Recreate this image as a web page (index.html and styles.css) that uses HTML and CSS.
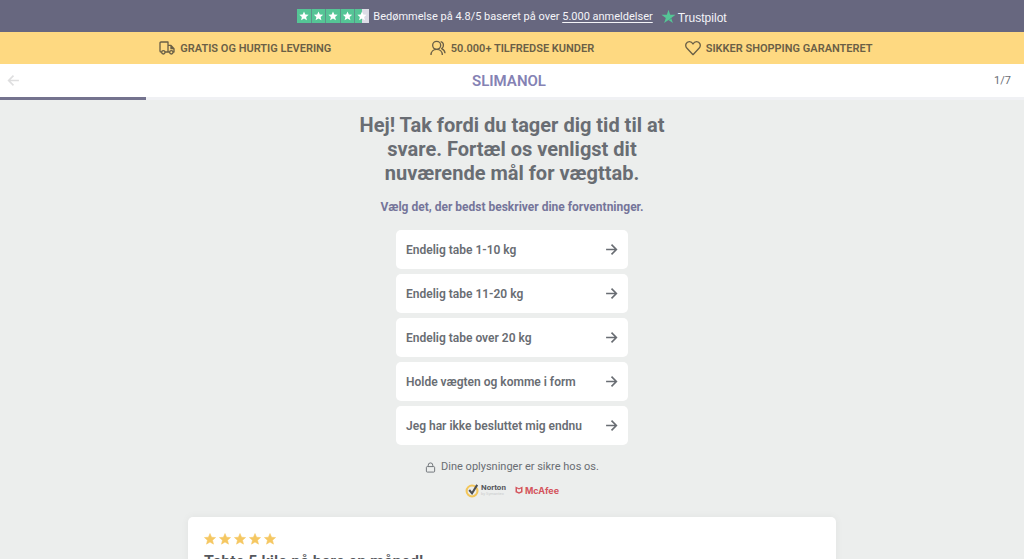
FILE: index.html
```html
<!DOCTYPE html>
<html lang="da">
<head>
    <meta charset="UTF-8">
    <meta name="viewport" content="width=device-width, initial-scale=1.0">
    <title>Slimanol</title>
    <link rel="stylesheet" href="styles.css">
</head>
<body>
    <svg class="sprite" aria-hidden="true">
        <symbol id="star" viewBox="0 0 24 24">
            <path d="M12 1l3.200 7.400 8 .7-6.100 5.300 1.900 7.900L12 18.100l-7 4.200 1.900-7.900L.8 9.100l8-.7z"/>
        </symbol>
        <symbol id="arrow" viewBox="0 0 24 24">
            <path d="M2 12h19M12 3l9 9-9 9"/>
        </symbol>
    </svg>

    <div class="rating-bar">
        <svg class="rating-stars" viewBox="0 0 72 14" role="img" aria-label="4.8 ud af 5 stjerner">
            <path fill="#55c596" d="M0 0h14v14H0zM14.500 0h14v14h-14zM29 0h14v14H29zM43.500 0h14v14h-14zM58 0h7v14h-7z"/>
            <path fill="#dcdce6" d="M65 0h7v14h-7z"/>
            <g fill="#fff">
                <use href="#star" x="2" y="2" width="10" height="10"/>
                <use href="#star" x="16.500" y="2" width="10" height="10"/>
                <use href="#star" x="31" y="2" width="10" height="10"/>
                <use href="#star" x="45.500" y="2" width="10" height="10"/>
                <use href="#star" x="60" y="2" width="10" height="10"/>
            </g>
        </svg>
        <span class="rating-text">Bedømmelse på 4.8/5 baseret på over <a href="#reviews">5.000 anmeldelser</a></span>
        <span class="trustpilot">
            <svg viewBox="0 0 24 24" aria-hidden="true">
                <path fill="#55c596" d="M12 1l2.700 8.200h8.600l-7 5.100 2.700 8.200-7-5.100-7 5.100 2.700-8.200-7-5.100h8.600z"/>
                <path fill="#3f9a7c" d="M16.900 16.100l-.600-1.800L12 17.400z"/>
            </svg>
            <span>Trustpilot</span>
        </span>
    </div>

    <div class="usp-bar">
        <ul class="usp-list">
            <li>
                <svg class="icon" viewBox="0 0 24 24" aria-hidden="true">
                    <path d="M4 18H3a1.500 1.500 0 0 1-1.500-1.500v-12A1.500 1.500 0 0 1 3 3h10.500v15H9M13.500 8H18l4.500 5v5H21M16 18h-2.500M18 8v5h4.500"/>
                    <circle cx="6.500" cy="18.500" r="2.500"/>
                    <circle cx="18.500" cy="18.500" r="2.500"/>
                </svg>
                GRATIS OG HURTIG LEVERING
            </li>
            <li>
                <svg class="icon" viewBox="0 0 24 24" aria-hidden="true">
                    <circle cx="10" cy="8" r="6"/>
                    <path d="M1.500 22.500c0-5 3.500-8.500 8.500-8.500s8.500 3.500 8.500 8.500M16 2.500c5 1 5.500 8 1.500 10.500 3 1.500 5 4 5 7"/>
                </svg>
                50.000+ TILFREDSE KUNDER
            </li>
            <li>
                <svg class="icon" viewBox="0 0 24 24" aria-hidden="true">
                    <path d="M12 22L3 12.500C-1 8 2 2.500 6.500 2.500c2.500 0 4.500 1.500 5.500 3.500 1-2 3-3.500 5.500-3.500C22 2.500 25 8 21 12.500z"/>
                </svg>
                SIKKER SHOPPING GARANTERET
            </li>
        </ul>
    </div>

    <header class="quiz-header">
        <button class="back" type="button" aria-label="Tilbage">
            <svg viewBox="0 0 24 24" aria-hidden="true"><path d="M22 12H3M12 3l-9 9 9 9"/></svg>
        </button>
        <a class="logo" href="#">SLIMANOL</a>
        <span class="step">1/7</span>
    </header>
    <div class="progress"><div class="progress-fill" style="width: 14.29%"></div></div>

    <main class="quiz">
        <h1>Hej! Tak fordi du tager dig tid til at svare. Fortæl os venligst dit nuværende mål for vægttab.</h1>
        <p class="hint">Vælg det, der bedst beskriver dine forventninger.</p>

        <div class="options">
            <button class="option" type="button">Endelig tabe 1-10 kg <svg aria-hidden="true"><use href="#arrow"/></svg></button>
            <button class="option" type="button">Endelig tabe 11-20 kg <svg aria-hidden="true"><use href="#arrow"/></svg></button>
            <button class="option" type="button">Endelig tabe over 20 kg <svg aria-hidden="true"><use href="#arrow"/></svg></button>
            <button class="option" type="button">Holde vægten og komme i form <svg aria-hidden="true"><use href="#arrow"/></svg></button>
            <button class="option" type="button">Jeg har ikke besluttet mig endnu <svg aria-hidden="true"><use href="#arrow"/></svg></button>
        </div>

        <p class="secure">
            <svg viewBox="0 0 24 24" aria-hidden="true">
                <rect x="3" y="10" width="18" height="12" rx="2"/>
                <path d="M7 10V7a5 5 0 0 1 10 0v3"/>
            </svg>
            Dine oplysninger er sikre hos os.
        </p>

        <div class="badges">
            <span class="norton">
                <svg viewBox="0 0 16 16" aria-hidden="true">
                    <circle cx="7.500" cy="8.500" r="5.800" fill="none" stroke="#f3c65a" stroke-width="2.200"/>
                    <path d="M4.500 7.500l3 3.500L13 2" fill="none" stroke="#4d4f52" stroke-width="2.200"/>
                </svg>
                <span class="norton-name">Norton<small>by Symantec</small></span>
            </span>
            <span class="mcafee">
                <svg viewBox="0 0 16 16" aria-hidden="true">
                    <path d="M1 1l7 3.500L15 1v11.500L8 15.500l-7-3V1zM4 5v5.500l4 2 4-2V5L8 7z" fill="#d4545c" fill-rule="evenodd"/>
                </svg>
                McAfee
            </span>
        </div>

        <article class="review" id="reviews">
            <div class="review-stars" role="img" aria-label="5 ud af 5 stjerner">
                <svg><use href="#star"/></svg>
                <svg><use href="#star"/></svg>
                <svg><use href="#star"/></svg>
                <svg><use href="#star"/></svg>
                <svg><use href="#star"/></svg>
            </div>
            <h2>Tabte 5 kilo på bare en måned!</h2>
        </article>
    </main>
</body>
</html>
```

FILE: styles.css
```css
* {
    margin: 0;
    padding: 0;
    box-sizing: border-box;
}

body {
    font-family: Roboto, "Liberation Sans", sans-serif;
    background: #eceeed;
    color: #696d73;
    height: 100vh;
    overflow: hidden;
}

button {
    font: inherit;
    color: inherit;
    background: none;
    border: 0;
    cursor: pointer;
}

svg {
    flex: none;
}

.sprite {
    position: absolute;
    width: 0;
    height: 0;
}

/* Top bars */
.rating-bar {
    display: flex;
    align-items: center;
    justify-content: center;
    height: 32px;
    background: #67677f;
    color: #f4f4f8;
    font-size: 11px;
}

.rating-stars {
    width: 72px;
    height: 14px;
    margin-right: 4px;
}

.rating-text a {
    color: inherit;
    text-underline-offset: 2px;
}

.trustpilot {
    display: flex;
    align-items: center;
    gap: 2px;
    margin-left: 8px;
    font-family: "Liberation Sans", Arial, sans-serif;
    font-size: 12px;
}

.trustpilot svg {
    width: 15px;
    height: 15px;
}

.trustpilot span {
    padding-top: 3px;
}

.usp-bar {
    background: #fed981;
}

.usp-list {
    display: grid;
    grid-template-columns: repeat(3, 1fr);
    max-width: 800px;
    height: 32px;
    margin: 0 auto;
    list-style: none;
    color: #6a5f46;
    font-size: 11px;
    font-weight: 600;
}

.usp-list li {
    display: flex;
    align-items: center;
    justify-content: center;
    gap: 5px;
}

.icon {
    width: 16px;
    height: 16px;
    fill: none;
    stroke: currentColor;
    stroke-width: 2;
    stroke-linejoin: round;
}

/* Quiz header */
.quiz-header {
    display: grid;
    grid-template-columns: 1fr auto 1fr;
    align-items: center;
    height: 33px;
    padding: 0 13px 0 7px;
    background: #fff;
}

.back {
    justify-self: start;
    display: flex;
}

.back svg {
    width: 13px;
    height: 13px;
    fill: none;
    stroke: #dededf;
    stroke-width: 3;
}

.logo {
    color: #8582b4;
    font-size: 15px;
    font-weight: 600;
    text-decoration: none;
}

.step {
    justify-self: end;
    font-size: 11px;
}

.progress {
    height: 3px;
    background: #f0f1f4;
}

.progress-fill {
    height: 100%;
    background: #74738e;
}

/* Question */
.quiz {
    display: flex;
    flex-direction: column;
    align-items: center;
    padding: 13px 16px 0;
}

h1 {
    max-width: 324px;
    font-size: 20px;
    line-height: 24px;
    font-weight: 700;
    text-align: center;
}

.hint {
    margin: 14px 0 15px;
    color: #75759a;
    font-size: 12px;
    line-height: 16px;
    font-weight: 700;
}

.options {
    display: flex;
    flex-direction: column;
    gap: 5px;
    width: 100%;
    max-width: 232px;
}

.option {
    display: flex;
    align-items: center;
    justify-content: space-between;
    height: 39px;
    padding: 0 10px;
    border-radius: 5px;
    background: #fff;
    font-size: 12px;
    font-weight: 600;
}

.option svg {
    width: 13px;
    height: 13px;
    fill: none;
    stroke: currentColor;
    stroke-width: 3;
}

.secure {
    display: flex;
    align-items: center;
    gap: 5px;
    margin-top: 14px;
    font-size: 11px;
    line-height: 16px;
}

.secure svg {
    width: 11px;
    height: 11px;
    fill: none;
    stroke: currentColor;
    stroke-width: 2;
}

.badges {
    display: flex;
    align-items: center;
    gap: 9px;
    height: 16px;
    margin-top: 7px;
    font-weight: 700;
}

.norton,
.mcafee {
    display: flex;
    align-items: center;
    gap: 1px;
}

.norton svg {
    width: 15px;
    height: 15px;
}

.norton-name {
    display: flex;
    flex-direction: column;
    color: #56585c;
    font-size: 8px;
    line-height: 8px;
}

.norton-name small {
    color: #c9cbcc;
    font-size: 4px;
    line-height: 4px;
    font-weight: 400;
}

.mcafee {
    gap: 2px;
    color: #d4545c;
    font-family: Inter, sans-serif;
    font-size: 9px;
}

.mcafee svg {
    width: 8px;
    height: 8px;
}

/* Review card */
.review {
    width: 100%;
    max-width: 648px;
    margin-top: 19px;
    padding: 16px;
    border-radius: 5px;
    background: #fff;
    box-shadow: 0 0 8px rgba(0, 0, 0, 0.05);
}

.review-stars {
    display: flex;
    gap: 3px;
    fill: #f5c761;
}

.review-stars svg {
    width: 12px;
    height: 12px;
    stroke: #f5c761;
    stroke-linejoin: round;
}

.review h2 {
    margin-top: 7px;
    color: #55585d;
    font-size: 16px;
    line-height: 20px;
    font-weight: 600;
}
```
